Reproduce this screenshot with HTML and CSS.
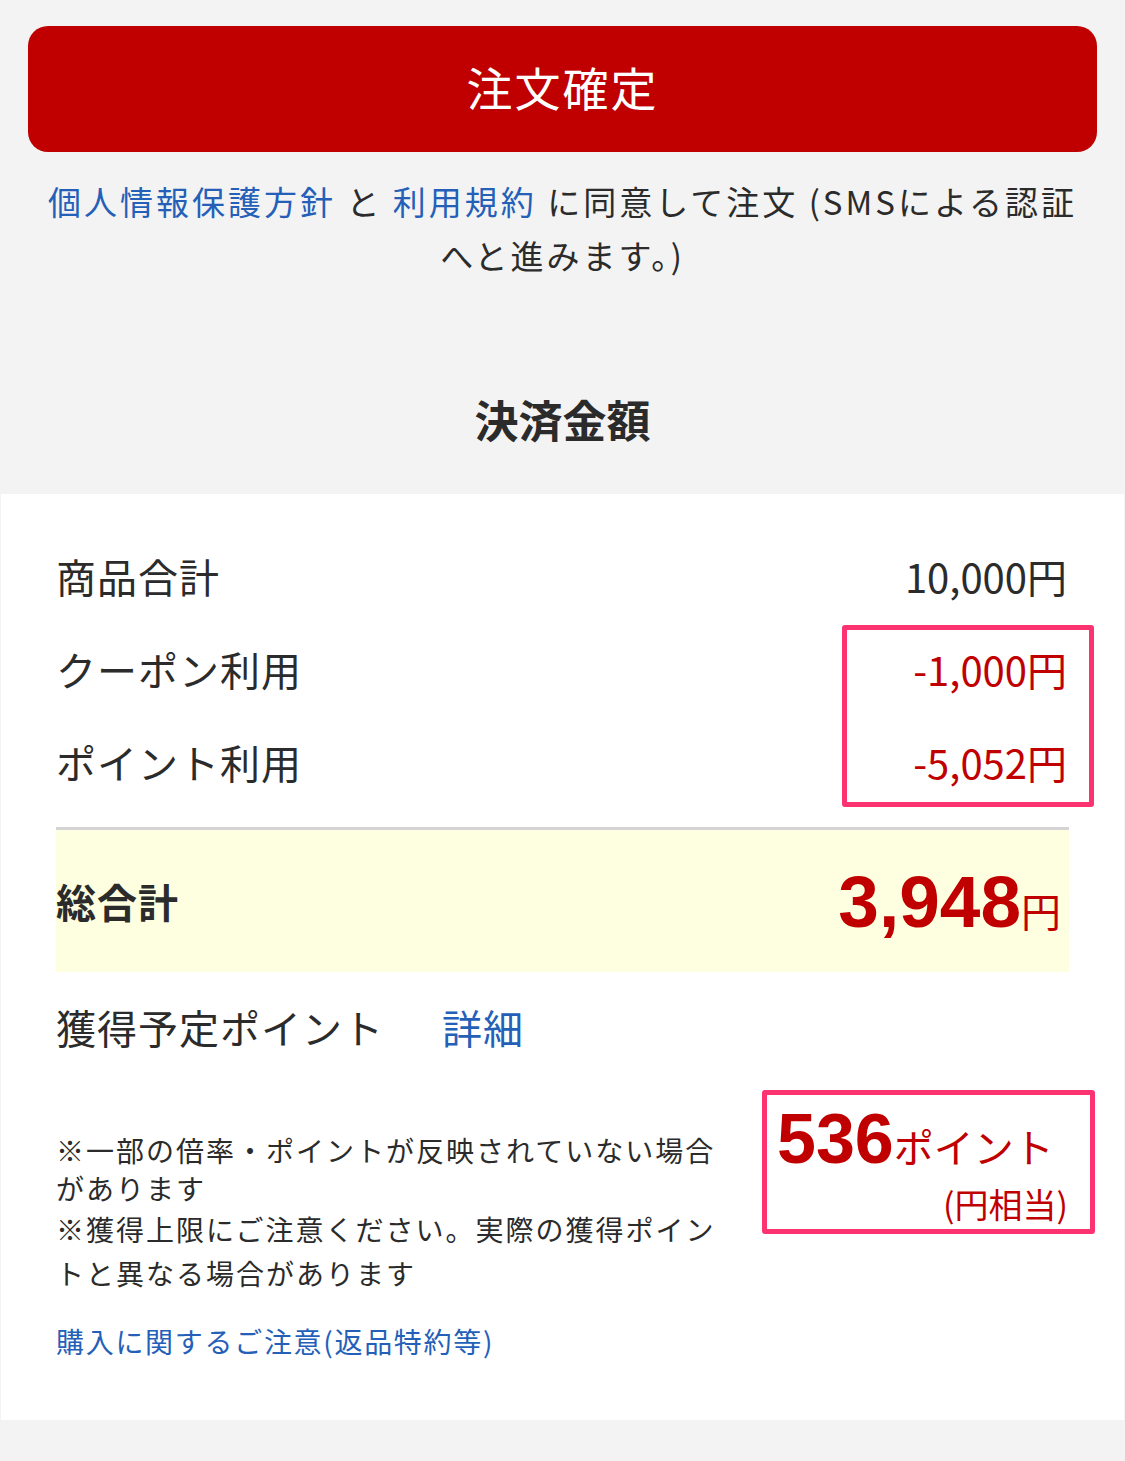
FILE: index.html
```html
<!DOCTYPE html>
<html lang="ja">
<head>
    <meta charset="UTF-8">
    <meta name="viewport" content="width=device-width, initial-scale=1.0">
    <title>注文確定</title>
    <link rel="stylesheet" href="styles.css">
</head>
<body>
    <div class="order-top">
        <button class="btn-order">注文確定</button>
        <p class="agree">
            <a href="#">個人情報保護方針</a> と <a href="#">利用規約</a> に同意して注文 (SMSによる認証<br>へと進みます。)
        </p>
        <h2 class="section-title">決済金額</h2>
    </div>

    <div class="payment">
        <div class="row">
            <span>商品合計</span>
            <span>10,000円</span>
        </div>
        <div class="discounts">
            <div class="row">
                <span>クーポン利用</span>
                <span class="minus">-1,000円</span>
            </div>
            <div class="row">
                <span>ポイント利用</span>
                <span class="minus">-5,052円</span>
            </div>
            <div class="mark mark-discount"></div>
        </div>

        <div class="total">
            <span class="total-label">総合計</span>
            <span class="total-value">3,948<small>円</small></span>
        </div>

        <div class="points-head">
            <span>獲得予定ポイント</span>
            <a href="#">詳細</a>
        </div>

        <div class="points-body">
            <div class="notes">
                <p class="note-a">※一部の倍率・ポイントが反映されていない場合があります</p>
                <p class="note-b">※獲得上限にご注意ください。実際の獲得ポイントと異なる場合があります</p>
            </div>
            <div class="points-box">
                <div class="points-num"><strong>536</strong>ポイント</div>
                <div class="points-yen">(円相当)</div>
            </div>
        </div>

        <a class="caution" href="#">購入に関するご注意(返品特約等)</a>
    </div>
</body>
</html>
```

FILE: styles.css
```css
body {
    margin: 0;
    background: #f3f3f3;
    color: #2b2b2b;
    font-family: "Noto Sans CJK JP", "Noto Sans", sans-serif;
}
a {
    color: #2460b8;
    text-decoration: none;
}
.order-top {
    padding: 26px 28px 0;
    text-align: center;
}
.btn-order {
    display: block;
    width: 100%;
    height: 126px;
    padding-bottom: 8px;
    border: none;
    border-radius: 20px;
    background: #c00000;
    color: #fff;
    font-family: inherit;
    font-size: 46px;
    letter-spacing: 2px;
}
.agree {
    margin: 22px 0 0;
    font-size: 33px;
    line-height: 54px;
    letter-spacing: 3px;
}
.section-title {
    margin: 107px 0 0;
    padding-bottom: 45px;
    font-size: 44px;
    font-weight: bold;
    line-height: 60px;
}
.payment {
    background: #fff;
    margin: 0 1px;
    padding: 36px 55px 59px;
}
.row {
    display: flex;
    justify-content: space-between;
    font-size: 40px;
    line-height: 93px;
    padding-right: 2px;
}
.row span:first-child {
    letter-spacing: 1px;
}
.minus {
    color: #c00000;
}
.discounts {
    position: relative;
    padding-bottom: 18px;
}
.mark {
    position: absolute;
    border: 5px solid #fb3370;
    border-radius: 3px;
}
.mark-discount {
    top: 2px;
    right: -25px;
    width: 242px;
    height: 172px;
}
.total {
    display: flex;
    justify-content: space-between;
    align-items: center;
    height: 142px;
    border-top: 3px solid #d4d4d4;
    background: #fefee0;
}
.total-label {
    font-size: 40px;
    font-weight: bold;
    letter-spacing: 1px;
}
.total-value {
    padding-right: 8px;
    color: #c00000;
    font-family: "Liberation Sans", Arial, sans-serif;
    font-size: 73px;
    font-weight: bold;
}
.total-value small {
    font-family: "Noto Sans CJK JP", sans-serif;
    font-size: 40px;
    font-weight: normal;
}
.points-head {
    display: flex;
    gap: 58px;
    margin-top: 25px;
    font-size: 40px;
    line-height: 60px;
    letter-spacing: 1px;
}
.points-body {
    display: flex;
    gap: 18px;
    margin-top: 33px;
}
.notes {
    flex: 1;
    padding-top: 41px;
    font-size: 28px;
    letter-spacing: 2px;
}
.notes p {
    margin: 0;
}
.note-a {
    line-height: 38px;
}
.note-b {
    line-height: 44px;
}
.points-box {
    box-sizing: border-box;
    width: 333px;
    height: 144px;
    margin-right: -26px;
    padding: 6px 22px 0 10px;
    border: 5px solid #fb3370;
    border-radius: 3px;
    color: #c00000;
}
.points-num {
    font-size: 40px;
    line-height: 76px;
}
.points-num strong {
    font-family: "Liberation Sans", Arial, sans-serif;
    font-size: 70px;
}
.points-yen {
    text-align: right;
    font-size: 34px;
    line-height: 40px;
}
.caution {
    display: inline-block;
    margin-top: 26px;
    font-size: 28px;
    line-height: 40px;
    letter-spacing: 1.7px;
}
```
